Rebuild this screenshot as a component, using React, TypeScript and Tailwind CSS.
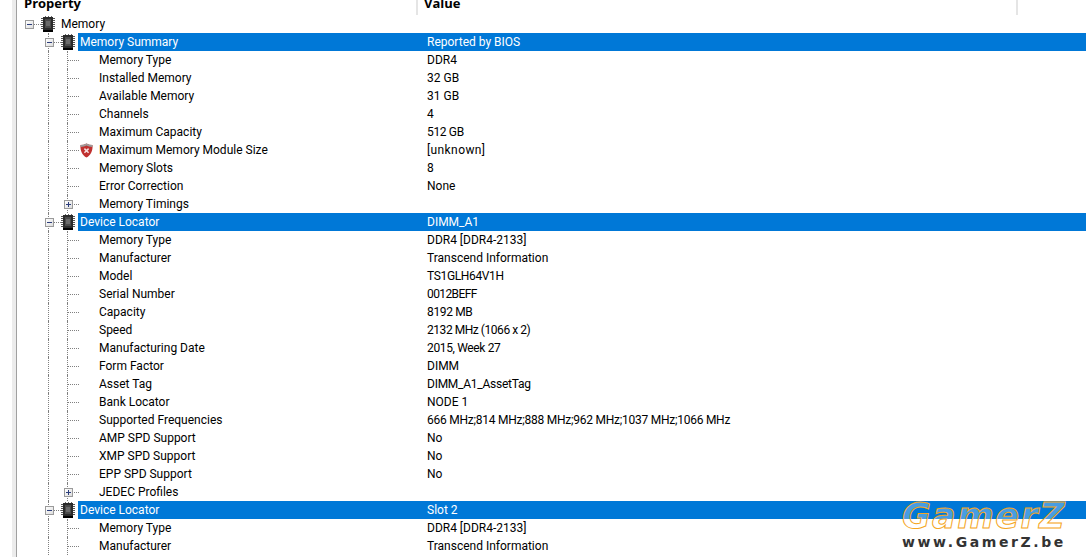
import React from 'react';

type RowData = {
  kind: 'root' | 'group' | 'item';
  label: string;
  value?: string;
  expand?: boolean;
  warn?: boolean;
  valueClass?: string;
};

const tight = 'tracking-[-0.35px]';

const rows: RowData[] = [
  { kind: 'root', label: 'Memory' },
  { kind: 'group', label: 'Memory Summary', value: 'Reported by BIOS' },
  { kind: 'item', label: 'Memory Type', value: 'DDR4' },
  { kind: 'item', label: 'Installed Memory', value: '32 GB' },
  { kind: 'item', label: 'Available Memory', value: '31 GB' },
  { kind: 'item', label: 'Channels', value: '4' },
  { kind: 'item', label: 'Maximum Capacity', value: '512 GB', valueClass: tight },
  { kind: 'item', label: 'Maximum Memory Module Size', value: '[unknown]', warn: true, valueClass: 'tracking-[0.4px]' },
  { kind: 'item', label: 'Memory Slots', value: '8' },
  { kind: 'item', label: 'Error Correction', value: 'None' },
  { kind: 'item', label: 'Memory Timings', expand: true },
  { kind: 'group', label: 'Device Locator', value: 'DIMM_A1' },
  { kind: 'item', label: 'Memory Type', value: 'DDR4 [DDR4-2133]' },
  { kind: 'item', label: 'Manufacturer', value: 'Transcend Information' },
  { kind: 'item', label: 'Model', value: 'TS1GLH64V1H', valueClass: tight },
  { kind: 'item', label: 'Serial Number', value: '0012BEFF', valueClass: 'tracking-[-0.6px]' },
  { kind: 'item', label: 'Capacity', value: '8192 MB', valueClass: tight },
  { kind: 'item', label: 'Speed', value: '2132 MHz (1066 x 2)', valueClass: 'tracking-[-0.45px]' },
  { kind: 'item', label: 'Manufacturing Date', value: '2015, Week 27', valueClass: tight },
  { kind: 'item', label: 'Form Factor', value: 'DIMM' },
  { kind: 'item', label: 'Asset Tag', value: 'DIMM_A1_AssetTag', valueClass: 'tracking-[-0.25px]' },
  { kind: 'item', label: 'Bank Locator', value: 'NODE 1' },
  { kind: 'item', label: 'Supported Frequencies', value: '666 MHz;814 MHz;888 MHz;962 MHz;1037 MHz;1066 MHz', valueClass: 'tracking-[-0.25px]' },
  { kind: 'item', label: 'AMP SPD Support', value: 'No' },
  { kind: 'item', label: 'XMP SPD Support', value: 'No' },
  { kind: 'item', label: 'EPP SPD Support', value: 'No' },
  { kind: 'item', label: 'JEDEC Profiles', expand: true },
  { kind: 'group', label: 'Device Locator', value: 'Slot 2' },
  { kind: 'item', label: 'Memory Type', value: 'DDR4 [DDR4-2133]' },
  { kind: 'item', label: 'Manufacturer', value: 'Transcend Information' },
];

function Chip() {
  return (
    <svg width="14" height="16" viewBox="0 0 14 16" className="shrink-0">
      <rect x="2" y="1" width="10" height="14" fill="#2b2b2b" />
      <rect x="4" y="3" width="6" height="9" fill="#4a4a4a" />
      <rect x="5" y="5" width="4" height="5" fill="#6a6a6a" />
      <rect x="2" y="14" width="10" height="2" fill="#000" />
      {[2, 4, 6, 8, 10, 12].map((y) => (
        <g key={y}>
          <rect x="0" y={y} width="2" height="1" fill="#555" />
          <rect x="12" y={y} width="2" height="1" fill="#555" />
        </g>
      ))}
      {[4, 7, 10].map((x) => (
        <rect key={x} x={x} y="0" width="1" height="1" fill="#666" />
      ))}
    </svg>
  );
}

function Shield() {
  return (
    <svg width="13" height="15" viewBox="0 0 13 15" className="shrink-0">
      <path d="M6.5 0.5 C8.5 1.5 10.5 2 12.5 2 C13 8 10.5 12.5 6.5 14.5 C2.5 12.5 0 8 0.5 2 C2.5 2 4.5 1.5 6.5 0.5 Z" fill="#c0302f" />
      <path d="M6.5 0.5 C8.5 1.5 10.5 2 12.5 2 L12.4 4 C10 4 8 3.4 6.5 2.6 C5 3.4 3 4 0.6 4 L0.5 2 C2.5 2 4.5 1.5 6.5 0.5 Z" fill="#9c9c9c" />
      <path d="M4.4 5.6 L8.6 9.8 M8.6 5.6 L4.4 9.8" stroke="#f6dcdc" strokeWidth="1.5" />
    </svg>
  );
}

function Toggle({ open }: { open?: boolean }) {
  return (
    <span className="flex h-[9px] w-[9px] items-center justify-center border border-[#9a9a9a] bg-gradient-to-br from-white to-[#dcdcdc]">
      <span className="relative block h-px w-[5px] bg-[#2c3e7c]">
        {!open && <span className="absolute left-[2px] top-[-2px] block h-[5px] w-px bg-[#2c3e7c]" />}
      </span>
    </span>
  );
}

function Row({ row }: { row: RowData }) {
  if (row.kind === 'root') {
    return (
      <div className="flex h-[18px] items-center pl-[8px]">
        <Toggle open />
        <span className="h-px w-[7px] border-t border-dotted border-[#808080]" />
        <span className="relative mt-[-1px]">
          <Chip />
        </span>
        <span className="ml-[6px]">{row.label}</span>
      </div>
    );
  }
  if (row.kind === 'group') {
    return (
      <div className="flex h-[18px] items-stretch">
        <div className="relative ml-[31px] flex w-[30px] items-center border-l border-dotted border-[#808080]">
          <span className="absolute left-[-4px]">
            <Toggle open />
          </span>
          <span className="ml-[5px] h-px w-[7px] border-t border-dotted border-[#808080]" />
          <Chip />
        </div>
        <div className="flex flex-1 items-center bg-[#0078d7] text-white">
          <span className="w-[349px] pl-[2px]">{row.label}</span>
          <span>{row.value}</span>
        </div>
      </div>
    );
  }
  return (
    <div className="flex h-[18px] items-stretch">
      <div className="ml-[31px] w-[19px] border-l border-dotted border-[#808080]" />
      <div className="relative flex w-[32px] items-center border-l border-dotted border-[#808080]">
        {row.expand && (
          <span className="absolute left-[-4px]">
            <Toggle />
          </span>
        )}
        <span className="h-px w-[11px] border-t border-dotted border-[#808080]" />
        {row.warn && <span className="ml-[1px]"><Shield /></span>}
      </div>
      <div className="flex flex-1 items-center">
        <span className="w-[328px]">{row.label}</span>
        <span className={row.valueClass}>{row.value}</span>
      </div>
    </div>
  );
}

export default function App() {
  return (
    <div className="relative flex h-[557px] w-[1086px] overflow-hidden bg-white text-[12px] text-black [font-family:'Roboto','Noto_Sans',sans-serif]">
      <div className="ml-[12px] w-[5px] shrink-0 border-r border-[#a0a0a0] bg-[#ececec]" />
      <div className="min-w-0 flex-1">
        <div className="flex h-[15px] items-end overflow-hidden text-[13px] font-bold leading-[18px] [font-family:'Open_Sans',sans-serif]">
          <div className="h-full w-[401px] shrink-0 border-r-2 border-[#e5e5e5] pl-[7px]">
            <div className="mt-[-6px]">Property</div>
          </div>
          <div className="h-full w-[600px] shrink-0 border-r-2 border-[#e5e5e5] pl-[6px]">
            <div className="mt-[-6px]">Value</div>
          </div>
        </div>
        <div>
          {rows.map((r, i) => (
            <Row key={i} row={r} />
          ))}
        </div>
      </div>
      <div className="pointer-events-none absolute left-[898px] top-[498px] w-[172px] text-center">
        <div className="text-[35px] font-bold italic leading-[36px] tracking-[1.5px] text-white/30 [-webkit-text-stroke:1px_#f5a623] [font-family:'DejaVu_Sans',sans-serif]">
          GamerZ
        </div>
        <div className="text-[14px] font-bold leading-[16px] tracking-[2.6px] text-[#333] [font-family:'DejaVu_Sans',sans-serif]">
          www.GamerZ.be
        </div>
      </div>
    </div>
  );
}
